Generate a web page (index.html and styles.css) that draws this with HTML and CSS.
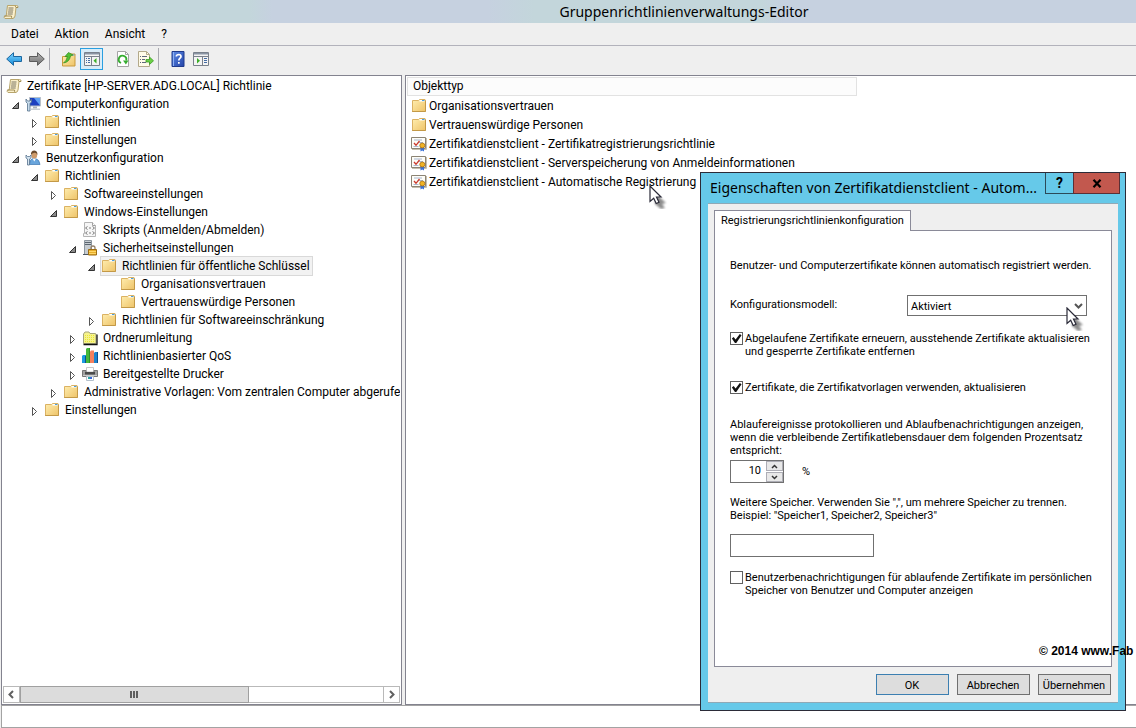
FILE: index.html
```html
<!DOCTYPE html>
<html lang="de">
<head>
<meta charset="utf-8">
<title>Gruppenrichtlinienverwaltungs-Editor</title>
<link rel="stylesheet" href="styles.css">
</head>
<body>
<svg class="defs" aria-hidden="true">
  <defs>
    <linearGradient id="g-folder" x1="0" y1="0" x2="1" y2="1"><stop offset="0" stop-color="#ffeeb0"/><stop offset="1" stop-color="#eec368"/></linearGradient>
    <linearGradient id="g-blue" x1="0" y1="0" x2="0" y2="1"><stop offset="0" stop-color="#7fd4ff"/><stop offset="1" stop-color="#128ad8"/></linearGradient>
    <linearGradient id="g-gray" x1="0" y1="0" x2="0" y2="1"><stop offset="0" stop-color="#b4b4b4"/><stop offset="1" stop-color="#707070"/></linearGradient>
    <linearGradient id="g-help" x1="0" y1="0" x2="1" y2="1"><stop offset="0" stop-color="#5d8ce6"/><stop offset="1" stop-color="#2443a8"/></linearGradient>

    <symbol id="i-open" viewBox="0 0 9 9"><path d="M7.500 1.500v6h-6z" fill="#8a8a8a" stroke="#333"/></symbol>
    <symbol id="i-closed" viewBox="0 0 9 9"><path d="M2.500 .5v8l4-4z" fill="#fff" stroke="#555"/></symbol>

    <symbol id="i-folder" viewBox="0 0 16 16"><path d="M1.500 2.500h6l1-1h5.500l.5 1v11h-13z" fill="url(#g-folder)" stroke="#dbb263"/><path d="M8.500 2h5v1.500h-5z" fill="#fff"/><path d="M11 2h2.500v1H11z" fill="#4b9fe0"/><path d="M1 13.500h13.500v-11" fill="none" stroke="#b98e3c" opacity=".7"/></symbol>
    <symbol id="i-scroll" viewBox="0 0 16 16"><path d="M4.500 1.500h9q2 0 1.500 2h-2L12 12q-.5 2.500-2.500 2.500H2q-1.500-1-.5-2.500h1.700z" fill="#fbf0cb" stroke="#b8a56c"/><path d="M12.500 2q-.3 1 .5 1.500h2M1.500 12h7q-.2 2 1 2.500" fill="none" stroke="#a08c55"/><path d="M5.500 4h5M5.300 6h5M5 8h5M4.700 10h5" stroke="#7b7462"/></symbol>
    <symbol id="i-computer" viewBox="0 0 16 16"><path d="M4.500 1.500h11v8.500h-11z" fill="#1c3fc0" stroke="#b8c0c8"/><path d="M9 2h6v7.500z" fill="#5fa0f4"/><path d="M8 10.500h4v2H8z" fill="#aab2ba"/><path d="M6 12.500h9v1.500H6z" fill="#c8ced4"/><path d="M1 3v3l1.500 1.500V15H5V7.500L6.500 6V3L5 5H2.500z" fill="#c8dcec" stroke="#54708c" stroke-width=".8"/></symbol>
    <symbol id="i-user" viewBox="0 0 16 16"><path d="M4.500 14.500q0-5 3-6h3q4 1 4.500 6z" fill="#69a5dc" stroke="#3b76b0" stroke-width=".7"/><path d="M7.500 8.500l1.800 3 1.700-3z" fill="#fff"/><ellipse cx="9.300" cy="5" rx="2.900" ry="3.600" fill="#cf9b6a"/><path d="M6 5q-.5-4.500 3.500-4.500Q13 1 12.300 5q-.8-2.500-2.800-2.200Q7 3 6 5z" fill="#6a4a2c"/><path d="M1 5v3l1.500 1v6h2V9L6 8V5L4.700 6.500H2.500z" fill="#d4e4f0" stroke="#54708c" stroke-width=".8"/></symbol>
    <symbol id="i-script" viewBox="0 0 16 16"><path d="M2.500.5h8l3 3v11h-12v-3h1z" fill="#f6f6f6" stroke="#b4b4b4"/><path d="M10.500.5v3h3" fill="#fff" stroke="#a0a0a0"/><path d="M5.500 4.500L3.500 6l2 1.500M10.500 4.500L12.500 6l-2 1.500M7 6h2M5.500 9.500l-2 1.500 2 1.500M10.500 9.500l2 1.500-2 1.500M7 11h2" fill="none" stroke="#7c7c7c"/></symbol>
    <symbol id="i-security" viewBox="0 0 16 16"><path d="M2.500.5h7v14h-7z" fill="#c6ccd2" stroke="#8b959e"/><path d="M3 2.500h6M3 4.500h6" stroke="#5b6670"/><path d="M1 14.500h7" stroke="#4c5660"/><path d="M9 10V8q0-2 2-2t2 2v2" fill="none" stroke="#94816a" stroke-width="1.300"/><path d="M6.500 9.500h8v5.500h-8z" fill="#e8ae2b" stroke="#9d6d12"/><path d="M7 11.500h7M7 13.500h7" stroke="#ffd766"/></symbol>
    <symbol id="i-redirect" viewBox="0 0 16 16"><path d="M1.500 4V13.500h12.500V4L13 3.500H8L7 2H3z" fill="#f6f38c" stroke="#a5a57c"/><path d="M3 5.500h10M3 7.500h10M3 9.500h10M3 11.500h10" stroke="#e9e634" stroke-dasharray="1 1"/><path d="M15 4.500V14.500H1.500" fill="none" stroke="#111" stroke-width="1.300"/></symbol>
    <symbol id="i-qos" viewBox="0 0 16 16"><path d="M0 8l1-1h3v8H0z" fill="#1b9be0"/><path d="M4 1l1-1h3v15H4z" fill="#45b83b"/><path d="M7 0h1v15H7z" fill="#2c9625"/><path d="M8 3.500l1-1h3V15H8z" fill="#f5805c"/><path d="M12 5l1-1h3v11h-4z" fill="#1d84cc"/><path d="M15 4h1v11h-1zM3 8h1v7H3z" fill="#0b4f90"/></symbol>
    <symbol id="i-printer" viewBox="0 0 16 16"><path d="M4.500 1.500h7V6h-7z" fill="#fff" stroke="#c9c9c9"/><path d="M.5 4.500H4v2h8v-2h3.500v6H.5z" fill="#a2a2a2" stroke="#777"/><path d="M3 6h10v2.500H3z" fill="#4a4a4a"/><path d="M1 9.500h14" stroke="#ccc"/><path d="M4.500 10.500h7v4h-7z" fill="#fff" stroke="#b4c0cc"/><path d="M6 11h2v2H6z" fill="#2aa5a8"/><path d="M8 11h2v2H8z" fill="#3a67d8"/></symbol>
    <symbol id="i-cert" viewBox="0 0 16 16"><path d="M.5 1.500h14v11H.5z" fill="#fdfdf8" stroke="#8c8474"/><path d="M15.500 2v11.500H1" fill="none" stroke="#c5bfae"/><path d="M3 4h8M8 6.500h4M2.500 10.500h5" stroke="#a9b7cf"/><path d="M3 7l2 2.300L8.500 5" fill="none" stroke="#cc3a2c" stroke-width="1.300"/><path d="M9.500 11v4.500l1.700-1 1.800 1V11z" fill="#3a72d8"/><circle cx="11.300" cy="9.500" r="2.500" fill="#f0b323" stroke="#a86f12" stroke-width=".8"/></symbol>

    <symbol id="i-back" viewBox="0 0 16 16"><path d="M.7 8L7.500 1.700V5.500h8v5h-8v3.800z" fill="url(#g-blue)" stroke="#1c669f"/></symbol>
    <symbol id="i-forward" viewBox="0 0 16 16"><path d="M15.300 8L8.500 1.700V5.500h-8v5h8v3.800z" fill="url(#g-gray)" stroke="#5c5c5c"/></symbol>
    <symbol id="i-up" viewBox="0 0 16 16"><path d="M1.500 5.500h6l1.500-2.500h5v12h-12.500z" fill="url(#g-folder)" stroke="#c99a3d"/><path d="M11.500 3.500h2v1h-2z" fill="#4b9fe0"/><path d="M2.500 12q3.500-2.500 3.800-6.500H4L7.500 1.500 12 4 9.500 5Q8.500 11 2.500 12z" fill="#52c234" stroke="#2d8a1d" stroke-width=".7"/></symbol>
    <symbol id="i-tree" viewBox="0 0 16 16"><path d="M.5 1.500h15v13H.5z" fill="#f4f4f4" stroke="#7a818c"/><path d="M1 2h14v1.500H1z" fill="#8a95a4"/><path d="M1 5.500h14M7.500 5v9.500" stroke="#7a818c"/><path d="M2 7.500h4M2 9.500h4M2 11.500h4" stroke="#456ca4" stroke-dasharray="1 1 2 1"/><path d="M12.500 7v5.500L9.500 9.700z" fill="#3cae28"/></symbol>
    <symbol id="i-actions" viewBox="0 0 16 16"><path d="M.5 1.500h15v13H.5z" fill="#f4f4f4" stroke="#7a818c"/><path d="M1 2h14v1.500H1z" fill="#8a95a4"/><path d="M1 5.500h14M9.500 5v9.500" stroke="#7a818c"/><path d="M11 7.500h3M11 9.500h3M11 11.500h3" stroke="#456ca4"/><path d="M4 7v5.500l3-2.800z" fill="#3cae28"/></symbol>
    <symbol id="i-refresh" viewBox="0 0 16 16"><path d="M2.500.5h8l3 3v12h-11z" fill="#fff" stroke="#a4a4a4"/><path d="M10.500.5v3h3" fill="none" stroke="#a4a4a4"/><path d="M6 12A3.800 3.800 0 1 1 11.200 9.500" fill="none" stroke="#36ad30" stroke-width="1.900"/><path d="M8 9.500h5.500l-2.600 4z" fill="#36ad30"/></symbol>
    <symbol id="i-export" viewBox="0 0 16 16"><path d="M.5.500h8l3 3v12H.5z" fill="#fffbe8" stroke="#b3a98a"/><path d="M8.500.5v3h3" fill="none" stroke="#b3a98a"/><path d="M2 5.500h1m1 0h5M2 8.500h1m1 0h3M2 11.500h1m1 0h4" stroke="#60687a"/><path d="M8 8.500h3.500V6l4 3.800-4 3.700V11H8z" fill="#6cd046" stroke="#3a9a24" stroke-width=".8"/></symbol>
    <symbol id="i-help" viewBox="0 0 16 16"><path d="M2 .5h12v15H2z" fill="url(#g-help)" stroke="#1f3a8c"/><path d="M3.500 1v14" stroke="#8db0f2"/><path d="M6.300 5.500Q6.500 3.500 8.800 3.500 11 3.600 11 5.500c0 1.700-2.200 1.800-2.200 4" fill="none" stroke="#fff" stroke-width="1.700"/><path d="M8 11h1.700v1.800H8z" fill="#fff"/></symbol>
    <symbol id="i-cursor" viewBox="0 0 20 24"><path d="M6 8l11 10-4 1 3 4-4 1-6-5z" fill="#000" opacity=".45" class="soft"/><path d="M1 1v15.500l3.700-3.300 2.500 5.300 2.800-1.300-2.500-5.200H12z" fill="#fff" stroke="#2a2a38" stroke-width="1.200"/></symbol>
  </defs>
</svg>

<header class="titlebar">
  <svg class="icon"><use href="#i-scroll"/></svg>
  <h1>Gruppenrichtlinienverwaltungs-Editor</h1>
</header>

<nav class="menubar">
  <button>Datei</button><button>Aktion</button><button>Ansicht</button><button>?</button>
</nav>

<div class="toolbar">
  <button aria-label="Zurück"><svg class="icon"><use href="#i-back"/></svg></button>
  <button aria-label="Vorwärts"><svg class="icon"><use href="#i-forward"/></svg></button>
  <span class="separator"></span>
  <button aria-label="Eine Ebene nach oben"><svg class="icon"><use href="#i-up"/></svg></button>
  <button class="active" aria-label="Konsolenstruktur"><svg class="icon"><use href="#i-tree"/></svg></button>
  <button class="group-start" aria-label="Aktualisieren"><svg class="icon"><use href="#i-refresh"/></svg></button>
  <button aria-label="Liste exportieren"><svg class="icon"><use href="#i-export"/></svg></button>
  <span class="separator"></span>
  <button aria-label="Hilfe"><svg class="icon"><use href="#i-help"/></svg></button>
  <button aria-label="Aktionsbereich"><svg class="icon"><use href="#i-actions"/></svg></button>
</div>

<main class="panes">
  <section class="tree-pane">
    <div class="tree">
      <div class="node"><span class="label"><svg class="icon"><use href="#i-scroll"/></svg>Zertifikate [HP-SERVER.ADG.LOCAL] Richtlinie</span></div>
      <ul>
        <li>
          <div class="node"><button class="toggle" aria-label="Reduzieren"><svg><use href="#i-open"/></svg></button><span class="label"><svg class="icon"><use href="#i-computer"/></svg>Computerkonfiguration</span></div>
          <ul>
            <li class="node"><button class="toggle" aria-label="Erweitern"><svg><use href="#i-closed"/></svg></button><span class="label"><svg class="icon"><use href="#i-folder"/></svg>Richtlinien</span></li>
            <li class="node"><button class="toggle" aria-label="Erweitern"><svg><use href="#i-closed"/></svg></button><span class="label"><svg class="icon"><use href="#i-folder"/></svg>Einstellungen</span></li>
          </ul>
        </li>
        <li>
          <div class="node"><button class="toggle" aria-label="Reduzieren"><svg><use href="#i-open"/></svg></button><span class="label"><svg class="icon"><use href="#i-user"/></svg>Benutzerkonfiguration</span></div>
          <ul>
            <li>
              <div class="node"><button class="toggle" aria-label="Reduzieren"><svg><use href="#i-open"/></svg></button><span class="label"><svg class="icon"><use href="#i-folder"/></svg>Richtlinien</span></div>
              <ul>
                <li class="node"><button class="toggle" aria-label="Erweitern"><svg><use href="#i-closed"/></svg></button><span class="label"><svg class="icon"><use href="#i-folder"/></svg>Softwareeinstellungen</span></li>
                <li>
                  <div class="node"><button class="toggle" aria-label="Reduzieren"><svg><use href="#i-open"/></svg></button><span class="label"><svg class="icon"><use href="#i-folder"/></svg>Windows-Einstellungen</span></div>
                  <ul>
                    <li class="node leaf"><span class="label"><svg class="icon"><use href="#i-script"/></svg>Skripts (Anmelden/Abmelden)</span></li>
                    <li>
                      <div class="node"><button class="toggle" aria-label="Reduzieren"><svg><use href="#i-open"/></svg></button><span class="label"><svg class="icon"><use href="#i-security"/></svg>Sicherheitseinstellungen</span></div>
                      <ul>
                        <li>
                          <div class="node"><button class="toggle" aria-label="Reduzieren"><svg><use href="#i-open"/></svg></button><span class="label selected"><svg class="icon"><use href="#i-folder"/></svg>Richtlinien für öffentliche Schlüssel</span></div>
                          <ul>
                            <li class="node leaf"><span class="label"><svg class="icon"><use href="#i-folder"/></svg>Organisationsvertrauen</span></li>
                            <li class="node leaf"><span class="label"><svg class="icon"><use href="#i-folder"/></svg>Vertrauenswürdige Personen</span></li>
                          </ul>
                        </li>
                        <li class="node"><button class="toggle" aria-label="Erweitern"><svg><use href="#i-closed"/></svg></button><span class="label"><svg class="icon"><use href="#i-folder"/></svg>Richtlinien für Softwareeinschränkung</span></li>
                      </ul>
                    </li>
                    <li class="node"><button class="toggle" aria-label="Erweitern"><svg><use href="#i-closed"/></svg></button><span class="label"><svg class="icon"><use href="#i-redirect"/></svg>Ordnerumleitung</span></li>
                    <li class="node"><button class="toggle" aria-label="Erweitern"><svg><use href="#i-closed"/></svg></button><span class="label"><svg class="icon"><use href="#i-qos"/></svg>Richtlinienbasierter QoS</span></li>
                    <li class="node"><button class="toggle" aria-label="Erweitern"><svg><use href="#i-closed"/></svg></button><span class="label"><svg class="icon"><use href="#i-printer"/></svg>Bereitgestellte Drucker</span></li>
                  </ul>
                </li>
                <li class="node"><button class="toggle" aria-label="Erweitern"><svg><use href="#i-closed"/></svg></button><span class="label"><svg class="icon"><use href="#i-folder"/></svg>Administrative Vorlagen: Vom zentralen Computer abgerufe</span></li>
              </ul>
            </li>
            <li class="node"><button class="toggle" aria-label="Erweitern"><svg><use href="#i-closed"/></svg></button><span class="label"><svg class="icon"><use href="#i-folder"/></svg>Einstellungen</span></li>
          </ul>
        </li>
      </ul>
    </div>
    <div class="scrollbar">
      <button aria-label="Nach links"><svg viewBox="0 0 9 9"><path d="M6 1L2.500 4.500 6 8"/></svg></button>
      <div class="track"><div class="thumb"><i></i><i></i><i></i></div></div>
      <button aria-label="Nach rechts"><svg viewBox="0 0 9 9"><path d="M3 1l3.500 3.500L3 8"/></svg></button>
    </div>
  </section>

  <section class="list-pane">
    <table>
      <thead><tr><th>Objekttyp</th></tr></thead>
      <tbody>
        <tr><td><span class="item"><svg class="icon"><use href="#i-folder"/></svg>Organisationsvertrauen</span></td></tr>
        <tr><td><span class="item"><svg class="icon"><use href="#i-folder"/></svg>Vertrauenswürdige Personen</span></td></tr>
        <tr><td><span class="item"><svg class="icon"><use href="#i-cert"/></svg>Zertifikatdienstclient - Zertifikatregistrierungsrichtlinie</span></td></tr>
        <tr><td><span class="item"><svg class="icon"><use href="#i-cert"/></svg>Zertifikatdienstclient - Serverspeicherung von Anmeldeinformationen</span></td></tr>
        <tr><td><span class="item"><svg class="icon"><use href="#i-cert"/></svg>Zertifikatdienstclient - Automatische Registrierung</span></td></tr>
      </tbody>
    </table>
  </section>
</main>

<footer class="statusbar"></footer>

<form class="dialog" role="dialog" aria-labelledby="dialog-title">
  <header class="dialog-head">
    <h2 id="dialog-title">Eigenschaften von Zertifikatdienstclient - Autom...</h2>
    <button type="button" class="help">?</button>
    <button type="button" class="close" aria-label="Schließen"><svg viewBox="0 0 10 9"><path d="M1.500 .8l7 7.400M8.500 .8l-7 7.400"/></svg></button>
  </header>
  <div class="dialog-body">
    <button type="button" class="tab" role="tab" aria-selected="true">Registrierungsrichtlinienkonfiguration</button>
    <div class="panel" role="tabpanel">
      <p>Benutzer- und Computerzertifikate können automatisch registriert werden.</p>
      <div class="model">
        <label for="model">Konfigurationsmodell:</label>
        <span class="select"><select id="model"><option>Aktiviert</option></select><svg viewBox="0 0 9 6"><path d="M1 1l3.500 3.500L8 1"/></svg></span>
      </div>
      <label class="check"><input type="checkbox" checked><span>Abgelaufene Zertifikate erneuern, ausstehende Zertifikate aktualisieren<br>und gesperrte Zertifikate entfernen</span></label>
      <label class="check second"><input type="checkbox" checked><span>Zertifikate, die Zertifikatvorlagen verwenden, aktualisieren</span></label>
      <label for="percent" class="hint">Ablaufereignisse protokollieren und Ablaufbenachrichtigungen anzeigen,<br>wenn die verbleibende Zertifikatlebensdauer dem folgenden Prozentsatz<br>entspricht:</label>
      <div class="percent">
        <span class="spinner">
          <input id="percent" type="text" value="10">
          <span class="steps">
            <button type="button" aria-label="Erhöhen"><svg viewBox="0 0 7 5"><path d="M1 4l2.500-2.500L6 4"/></svg></button>
            <button type="button" aria-label="Verringern"><svg viewBox="0 0 7 5"><path d="M1 1l2.500 2.500L6 1"/></svg></button>
          </span>
        </span>
        <span>%</span>
      </div>
      <label for="stores" class="stores-label">Weitere Speicher. Verwenden Sie ",", um mehrere Speicher zu trennen.<br>Beispiel: "Speicher1, Speicher2, Speicher3"</label>
      <input id="stores" class="stores" type="text">
      <label class="check notify"><input type="checkbox"><span>Benutzerbenachrichtigungen für ablaufende Zertifikate im persönlichen<br>Speicher von Benutzer und Computer anzeigen</span></label>
    </div>
    <div class="actions">
      <button type="button" class="default">OK</button>
      <button type="button">Abbrechen</button>
      <button type="button">Übernehmen</button>
    </div>
  </div>
</form>

<svg class="cursor on-list" aria-hidden="true"><use href="#i-cursor"/></svg>
<svg class="cursor on-select" aria-hidden="true"><use href="#i-cursor"/></svg>
<div class="watermark">© 2014 www.Fab</div>
</body>
</html>
```
FILE: styles.css
```css
* { box-sizing: border-box; }

body {
  margin: 0;
  height: 100vh;
  display: flex;
  flex-direction: column;
  position: relative;
  overflow: hidden;
  background: #efefef;
  color: #000;
  font: 12px/18px Roboto, "Open Sans", sans-serif;
}

button, input, select { font: inherit; color: inherit; margin: 0; }
button { border: 0; padding: 0; background: none; }
ul { list-style: none; margin: 0; padding: 0; }
h1, h2, p { margin: 0; font-weight: normal; }
svg { display: block; flex: none; }

.defs { position: absolute; width: 0; height: 0; }
.icon { width: 16px; height: 16px; }

/* Window title, menu and toolbar */
.titlebar {
  display: flex;
  align-items: center;
  height: 23px;
  padding: 0 3px;
  background: linear-gradient(90deg, #c3d6db 0, #c3d6db 22%, #c6d1e0 24%, #c6d1e0 43%, #c3d6db 47%, #c3d6db 67%, #c6d1e0 69%);
}
.titlebar h1 {
  flex: 1;
  text-align: center;
  padding-left: 216px;
  font: 14px/22px "Noto Sans", "Open Sans", sans-serif;
}

.menubar {
  display: flex;
  gap: 16px;
  height: 23px;
  padding: 0 11px;
  border-bottom: 1px solid #b2b2bb;
}

.toolbar {
  display: flex;
  align-items: center;
  height: 29px;
  padding: 0 2px 4px;
}
.toolbar button {
  width: 23px;
  height: 22px;
  padding: 0 3px;
  border: 1px solid transparent;
}
.toolbar .active { background: #d9ecf8; border-color: #2a9fe0; }
.toolbar .group-start { margin-left: 8px; }
.separator { width: 1px; height: 22px; margin: 0 7px 0 1px; background: #a9a9b0; }

/* Panes */
.panes {
  flex: 1;
  min-height: 0;
  display: flex;
  gap: 3px;
  padding-left: 1px;
}
.tree-pane, .list-pane {
  background: #fff;
  border: 1px solid #83838f;
  min-width: 0;
}
.tree-pane {
  flex: 0 0 401px;
  display: flex;
  flex-direction: column;
  padding: 1px;
}
.list-pane { flex: 1; border-right: 0; padding: 1px; }

.tree { flex: 1; overflow: hidden; padding-left: 3px; }
.tree ul ul { padding-left: 19px; }
.node { display: flex; height: 18px; white-space: nowrap; }
.leaf { padding-left: 19px; }
.toggle { display: grid; place-items: center; flex: none; width: 19px; padding-top: 2px; }
.toggle svg { width: 9px; height: 9px; }
.label {
  display: flex;
  align-items: center;
  gap: 5px;
}
.selected { padding-right: 2px; background: #f2f2f2; outline: 1px solid #d9d9d9; }

.scrollbar { display: flex; height: 17px; }
.scrollbar button {
  display: grid;
  place-items: center;
  width: 17px;
  border: 1px solid #b9b9b9;
  background: #fff;
}
.scrollbar svg { width: 9px; height: 9px; fill: none; stroke: #606060; stroke-width: 2; }
.track { flex: 1; border: solid #b9b9b9; border-width: 1px 0; }
.thumb {
  display: flex;
  justify-content: center;
  align-items: center;
  gap: 1px;
  width: 63%;
  height: 17px;
  margin: -1px 0;
  border: 1px solid #a0a0a0;
  background: #dcdcdc;
}
.thumb i { width: 2px; height: 7px; background: #606060; }

.list-pane table { width: 450px; border-collapse: separate; border-spacing: 0; }
.list-pane th {
  height: 19px;
  padding: 0 5px;
  border: 1px solid #e2e2e2;
  background: #fcfcfc;
  text-align: left;
  font-weight: normal;
  line-height: 17px;
}
.list-pane td { height: 19px; padding: 0 0 0 4px; }
.item { display: flex; align-items: center; gap: 2px; height: 19px; white-space: nowrap; }

.statusbar { height: 23px; margin: 0 0 0 1px; background: #fff; border: 1px solid #a3a3a3; border-right: 0; }

/* Properties window */
.dialog {
  position: absolute;
  top: 172px;
  right: 10px;
  width: 426px;
  padding: 0 7px 7px;
  border: 1px solid #2b2b38;
  background: #66c9e9;
  font-size: 11px;
  line-height: 13px;
}
.dialog-head { display: flex; align-items: flex-start; height: 30px; margin-right: -2px; }
.dialog-head h2 {
  flex: 1;
  padding-left: 2px;
  white-space: nowrap;
  font: 14px/30px "Noto Sans", "Open Sans", sans-serif;
}
.dialog-head button { display: grid; place-items: center; height: 21px; border: 1px solid #2b4a58; border-top: 0; }
.help { width: 29px; font-size: 14px; font-weight: bold; }
.dialog-head .close { width: 47px; margin-left: -1px; background: #c2584e; border-color: #5b2f35; }
.close svg { width: 10px; height: 9px; fill: none; stroke: #000; stroke-width: 2.200; }

.dialog-body { padding: 6px; background: #efefef; border: solid #8fa9b6; border-width: 1px 0; }
.tab {
  display: block;
  position: relative;
  height: 21px;
  padding: 0 6px 2px;
  border: 1px solid #8a8a98;
  border-bottom: 0;
  margin-bottom: -1px;
  background: #fff;
}
.panel {
  display: flex;
  flex-direction: column;
  align-items: flex-start;
  padding: 28px 14px 69px 15px;
  border: 1px solid #8a8a98;
  background: #fff;
}
.model { display: flex; justify-content: space-between; align-self: stretch; margin: 23px 10px 0 0; line-height: 19px; }
.select { display: flex; align-items: center; position: relative; width: 180px; height: 21px; }
.select select {
  appearance: none;
  width: 100%;
  height: 21px;
  padding: 1px 3px 0;
  border: 1px solid #707070;
  border-radius: 0;
  background: #fff;
}
.select svg { position: absolute; right: 4px; width: 9px; height: 6px; fill: none; stroke: #555; stroke-width: 2; pointer-events: none; }

.check { display: flex; gap: 2px; margin-top: 16px; }
.check input {
  appearance: none;
  flex: none;
  width: 13px;
  height: 13px;
  border: 1px solid #606060;
  background: #fff;
}
.check input:checked::before {
  content: "";
  display: block;
  height: 11px;
  background: #111;
  clip-path: polygon(8% 50%, 24% 36%, 42% 58%, 80% 10%, 96% 20%, 48% 92%, 36% 92%);
}
.second { margin-top: 23px; }
.hint { margin-top: 24px; }
.percent { display: flex; align-items: center; gap: 18px; margin-top: 3px; line-height: 20px; }
.spinner { display: flex; width: 54px; height: 23px; border: 1px solid #707070; background: #fff; }
.spinner input { flex: 1; min-width: 0; border: 0; padding: 0 5px 2px; text-align: right; background: none; }
.steps { display: flex; flex-direction: column; gap: 1px; width: 17px; }
.steps button { flex: 1; display: grid; place-items: center; background: #e8e8e8; border: 1px solid #adadb5; }
.steps svg { width: 7px; height: 5px; fill: none; stroke: #333; stroke-width: 1.500; }
.stores-label { margin-top: 13px; }
.stores { width: 144px; height: 23px; margin-top: 12px; padding: 0 4px; border: 1px solid #707070; background: #fff; }
.notify { margin-top: 14px; }

.actions { display: flex; justify-content: flex-end; gap: 8px; padding: 7px 1px 1px 0; }
.actions button { width: 73px; height: 21px; padding: 1px 1px 0 0; border: 1px solid #707070; background: #ddd; }
.actions .default { border-color: #3c7fb1; }

/* Pointers and credit floating over the windows */
.cursor { position: absolute; width: 20px; height: 24px; overflow: visible; pointer-events: none; }
.soft { filter: blur(1px); }
.on-list { left: 649px; top: 185px; }
.on-select { left: 1066px; top: 307px; }
.watermark {
  position: absolute;
  left: 1039px;
  top: 644px;
  white-space: nowrap;
  font: bold 12px/14px "Liberation Sans", sans-serif;
}
```
